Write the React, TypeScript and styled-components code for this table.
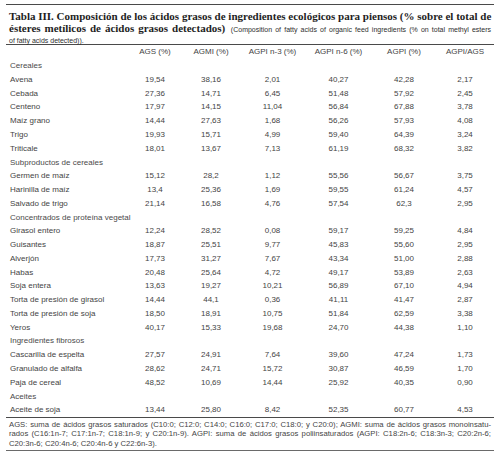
import React from 'react';
import styled, { createGlobalStyle } from 'styled-components';

const GlobalStyle = createGlobalStyle`
  html, body {
    margin: 0;
    padding: 0;
    background: #ffffff;
  }
`;

const ROW_HEIGHT = 13.77;
const COLUMNS = '122px 54px 58px 65px 67px 64px 58px';

const Page = styled.div`
  width: 488px;
  height: 451px;
  padding: 4px 6px 0 6px;
  background: #ffffff;
  color: #444444;
  font-family: 'Liberation Sans', Arial, sans-serif;
`;

const Caption = styled.div`
  border-top: 1px solid #4a4a4a;
  border-bottom: 1px solid #4a4a4a;
  padding: 3px 3px 1px 3px;
`;

const CaptionLine = styled.div<{ $last?: boolean; $h: number }>`
  height: ${(p) => p.$h}px;
  line-height: ${(p) => p.$h}px;
  white-space: nowrap;
  text-align: ${(p) => (p.$last ? 'left' : 'justify')};
  text-align-last: ${(p) => (p.$last ? 'left' : 'justify')};
`;

const TitleText = styled.span`
  font-family: 'Liberation Serif', 'Times New Roman', serif;
  font-weight: bold;
  font-size: 11px;
  color: #1e1e1e;
`;

const SubText = styled.span`
  font-family: 'Liberation Sans', Arial, sans-serif;
  font-size: 7px;
  color: #2e2e2e;
`;

const Table = styled.div`
  display: flex;
  flex-direction: column;
`;

const Row = styled.div`
  display: grid;
  grid-template-columns: ${COLUMNS};
  height: ${ROW_HEIGHT}px;
  align-items: center;
  font-size: 8px;
`;

const Label = styled.div<{ $section?: boolean }>`
  padding-left: 4px;
  white-space: nowrap;
  color: ${(p) => (p.$section ? '#4a4a4a' : '#444444')};
`;

const Cell = styled.div`
  text-align: center;
  white-space: nowrap;
`;

const Footer = styled.div`
  border-top: 1px solid #4a4a4a;
  border-bottom: 1px solid #6a6a6a;
  padding: 2px 3px 2px 3px;
  font-size: 7.7px;
  color: #444444;
`;

const FooterLine = styled.div<{ $last?: boolean }>`
  height: 9.6px;
  line-height: 9.6px;
  white-space: nowrap;
  text-align: ${(p) => (p.$last ? 'left' : 'justify')};
  text-align-last: ${(p) => (p.$last ? 'left' : 'justify')};
`;

type Item = { name: string; values?: string[] };

const headers = ['AGS (%)', 'AGMI (%)', 'AGPI n-3 (%)', 'AGPI n-6 (%)', 'AGPI (%)', 'AGPI/AGS'];

const rows: Item[] = [
  { name: 'Cereales' },
  { name: 'Avena', values: ['19,54', '38,16', '2,01', '40,27', '42,28', '2,17'] },
  { name: 'Cebada', values: ['27,36', '14,71', '6,45', '51,48', '57,92', '2,45'] },
  { name: 'Centeno', values: ['17,97', '14,15', '11,04', '56,84', '67,88', '3,78'] },
  { name: 'Maíz grano', values: ['14,44', '27,63', '1,68', '56,26', '57,93', '4,08'] },
  { name: 'Trigo', values: ['19,93', '15,71', '4,99', '59,40', '64,39', '3,24'] },
  { name: 'Triticale', values: ['18,01', '13,67', '7,13', '61,19', '68,32', '3,82'] },
  { name: 'Subproductos de cereales' },
  { name: 'Germen de maíz', values: ['15,12', '28,2', '1,12', '55,56', '56,67', '3,75'] },
  { name: 'Harinilla de maíz', values: ['13,4', '25,36', '1,69', '59,55', '61,24', '4,57'] },
  { name: 'Salvado de trigo', values: ['21,14', '16,58', '4,76', '57,54', '62,3', '2,95'] },
  { name: 'Concentrados de proteína vegetal' },
  { name: 'Girasol entero', values: ['12,24', '28,52', '0,08', '59,17', '59,25', '4,84'] },
  { name: 'Guisantes', values: ['18,87', '25,51', '9,77', '45,83', '55,60', '2,95'] },
  { name: 'Alverjón', values: ['17,73', '31,27', '7,67', '43,34', '51,00', '2,88'] },
  { name: 'Habas', values: ['20,48', '25,64', '4,72', '49,17', '53,89', '2,63'] },
  { name: 'Soja entera', values: ['13,63', '19,27', '10,21', '56,89', '67,10', '4,94'] },
  { name: 'Torta de presión de girasol', values: ['14,44', '44,1', '0,36', '41,11', '41,47', '2,87'] },
  { name: 'Torta de presión de soja', values: ['18,50', '18,91', '10,75', '51,84', '62,59', '3,38'] },
  { name: 'Yeros', values: ['40,17', '15,33', '19,68', '24,70', '44,38', '1,10'] },
  { name: 'Ingredientes fibrosos' },
  { name: 'Cascarilla de espelta', values: ['27,57', '24,91', '7,64', '39,60', '47,24', '1,73'] },
  { name: 'Granulado de alfalfa', values: ['28,62', '24,71', '15,72', '30,87', '46,59', '1,70'] },
  { name: 'Paja de cereal', values: ['48,52', '10,69', '14,44', '25,92', '40,35', '0,90'] },
  { name: 'Aceites' },
  { name: 'Aceite de soja', values: ['13,44', '25,80', '8,42', '52,35', '60,77', '4,53'] },
];

export default function App() {
  return (
    <>
      <GlobalStyle />
      <Page>
        <Caption>
          <CaptionLine $h={13}>
            <TitleText>
              Tabla III. Composición de los ácidos grasos de ingredientes ecológicos para piensos (% sobre el total de
            </TitleText>
          </CaptionLine>
          <CaptionLine $h={12}>
            <TitleText>ésteres metílicos de ácidos grasos detectados)</TitleText>{' '}
            <SubText>(Composition of fatty acids of organic feed ingredients (% on total methyl esters</SubText>
          </CaptionLine>
          <CaptionLine $h={10} $last>
            <SubText>of fatty acids detected)).</SubText>
          </CaptionLine>
        </Caption>
        <Table>
          <Row>
            <Label />
            {headers.map((h) => (
              <Cell key={h}>{h}</Cell>
            ))}
          </Row>
          {rows.map((r) => (
            <Row key={r.name}>
              <Label $section={!r.values}>{r.name}</Label>
              {r.values?.map((v, i) => (
                <Cell key={i}>{v}</Cell>
              ))}
            </Row>
          ))}
        </Table>
        <Footer>
          <FooterLine>
            AGS: suma de ácidos grasos saturados (C10:0; C12:0; C14:0; C16:0; C17:0; C18:0; y C20:0); AGMI: suma de ácidos grasos monoinsatu-
          </FooterLine>
          <FooterLine>
            rados (C16:1n-7; C17:1n-7; C18:1n-9; y C20:1n-9). AGPI: suma de ácidos grasos poliinsaturados (AGPI: C18:2n-6; C18:3n-3; C20:2n-6;
          </FooterLine>
          <FooterLine $last>C20:3n-6; C20:4n-6; C20:4n-6 y C22:6n-3).</FooterLine>
        </Footer>
      </Page>
    </>
  );
}
